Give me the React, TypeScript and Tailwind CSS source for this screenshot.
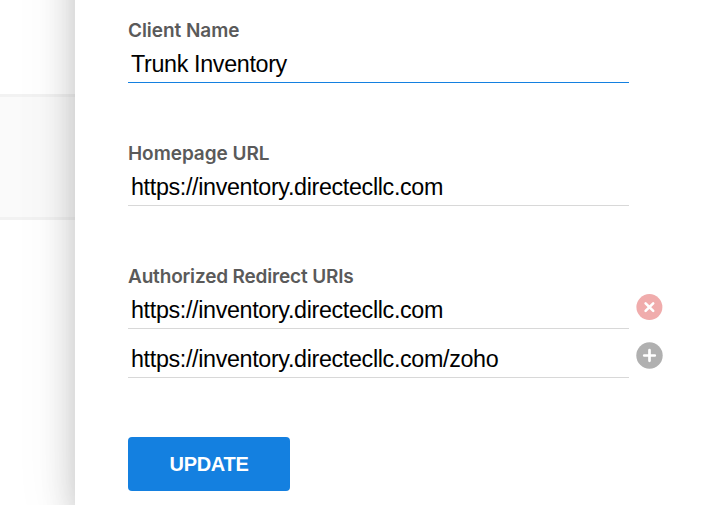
import React from "react";

const valueFont = "font-['Liberation_Sans',Arial,sans-serif]";

function Label({ children, spacing }: { children: string; spacing: string }) {
  return (
    <div className={`flex h-[34px] items-center whitespace-nowrap pt-[5px] font-[Inter,sans-serif] text-[19px] font-semibold text-[#5a5a5a] ${spacing}`}>
      {children}
    </div>
  );
}

function Value({ children, focused = false }: { children: string; focused?: boolean }) {
  return (
    <div
      className={`flex h-[37px] w-[501px] items-center whitespace-nowrap border-b pl-[3px] text-[23.3px] leading-[37px] tracking-[-0.34px] text-black ${valueFont} ${
        focused ? "border-[#1480e0]" : "border-[#d8d8d8]"
      }`}
    >
      {children}
    </div>
  );
}

export default function App() {
  return (
    <div className="flex h-[505px] w-[720px] overflow-hidden bg-white">
      <aside className="w-[75px] shrink-0 pt-[94px]">
        <div className="h-[126px] border-y-[3px] border-[#f2f2f2] bg-[#fafafa]" />
      </aside>
      <main className="-mt-[100px] h-[620px] w-[645px] shrink-0 bg-white pl-[53px] pt-[112px] shadow-[0_0_60px_rgba(0,0,0,0.09),0_0_32px_rgba(0,0,0,0.19)]">
        <section className="h-[123px]">
          <Label spacing="tracking-[-0.05px]">Client Name</Label>
          <Value focused>Trunk Inventory</Value>
        </section>
        <section className="h-[123px]">
          <Label spacing="tracking-[-0.05px]">Homepage URL</Label>
          <Value>https://inventory.directecllc.com</Value>
        </section>
        <section>
          <Label spacing="tracking-[-0.17px]">Authorized Redirect URIs</Label>
          <div className="flex items-start gap-[7px]">
            <Value>https://inventory.directecllc.com</Value>
            <svg className="mt-[2px]" width="27" height="27" viewBox="0 0 27 27">
              <circle cx="13.4" cy="13.1" r="13" fill="#f0acac" />
              <path d="M9.6 9.3 17.2 16.9M17.2 9.3 9.6 16.9" stroke="#fff" strokeWidth="2.6" strokeLinecap="round" />
            </svg>
          </div>
          <div className="mt-3 flex items-start gap-[7px]">
            <Value>https://inventory.directecllc.com/zoho</Value>
            <svg className="mt-px" width="27" height="27" viewBox="0 0 27 27">
              <circle cx="13.5" cy="13.5" r="13.2" fill="#b0b0b0" />
              <path d="M8.2 13.5H18.8M13.5 8.2V18.8" stroke="#fff" strokeWidth="2.7" strokeLinecap="round" />
            </svg>
          </div>
        </section>
        <button className={`mt-[59px] flex h-[54px] w-[162px] items-center justify-center rounded bg-[#1480e0] text-[20px] font-bold tracking-[-0.3px] text-white ${valueFont}`}>
          UPDATE
        </button>
      </main>
    </div>
  );
}
